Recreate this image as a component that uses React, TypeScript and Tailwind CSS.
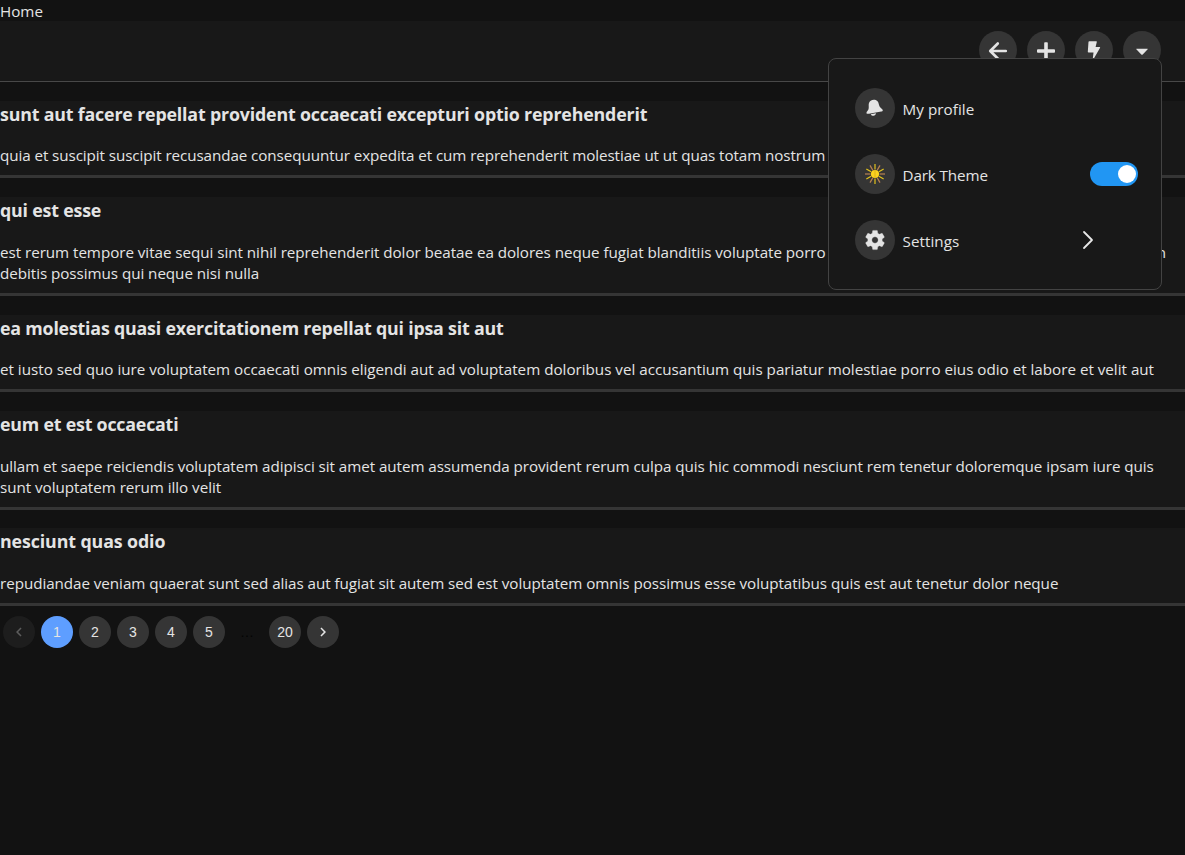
import type { ReactNode } from 'react';

type Post = { title: string; titleClass: string; lines: { text: string; cls: string }[]; cls: string; gap: string };

const posts: Post[] = [
  {
    title: 'sunt aut facere repellat provident occaecati excepturi optio reprehenderit',
    titleClass: 'tracking-[-0.165px]',
    cls: 'h-[77px] mb-[19px]',
    gap: 'mb-[18px]',
    lines: [
      { text: 'quia et suscipit suscipit recusandae consequuntur expedita et cum reprehenderit molestiae ut ut quas totam nostrum', cls: 'tracking-[-0.078px]' },
    ],
  },
  {
    title: 'qui est esse',
    titleClass: 'tracking-[-0.18px]',
    cls: 'h-[99px] mb-[19px]',
    gap: 'mb-[19px]',
    lines: [
      { text: 'est rerum tempore vitae sequi sint nihil reprehenderit dolor beatae ea dolores neque fugiat blanditiis voluptate porro vel nihil molestiae ut reiciendis qui aperiam non', cls: 'tracking-[-0.038px]' },
      { text: 'debitis possimus qui neque nisi nulla', cls: 'tracking-[-0.045px]' },
    ],
  },
  {
    title: 'ea molestias quasi exercitationem repellat qui ipsa sit aut',
    titleClass: 'tracking-[-0.19px]',
    cls: 'h-[77px] mb-[19px]',
    gap: 'mb-[18px]',
    lines: [
      { text: 'et iusto sed quo iure voluptatem occaecati omnis eligendi aut ad voluptatem doloribus vel accusantium quis pariatur molestiae porro eius odio et labore et velit aut', cls: 'tracking-[-0.004px]' },
    ],
  },
  {
    title: 'eum et est occaecati',
    titleClass: 'tracking-[-0.2px]',
    cls: 'h-[99px] mb-[18px]',
    gap: 'mb-[19px]',
    lines: [
      { text: 'ullam et saepe reiciendis voluptatem adipisci sit amet autem assumenda provident rerum culpa quis hic commodi nesciunt rem tenetur doloremque ipsam iure quis', cls: 'tracking-[-0.054px]' },
      { text: 'sunt voluptatem rerum illo velit', cls: 'tracking-[-0.035px]' },
    ],
  },
  {
    title: 'nesciunt quas odio',
    titleClass: 'tracking-[-0.1px]',
    cls: 'h-[78px]',
    gap: 'mb-[19px]',
    lines: [
      { text: 'repudiandae veniam quaerat sunt sed alias aut fugiat sit autem sed est voluptatem omnis possimus esse voluptatibus quis est aut tenetur dolor neque', cls: 'tracking-[-0.050px]' },
    ],
  },
];

function RoundButton({ children }: { children: ReactNode }) {
  return <button className="flex size-[38px] items-center justify-center rounded-full bg-[#353535] pt-[2px] text-[#e4e4e4]">{children}</button>;
}

function MenuIcon({ children }: { children: ReactNode }) {
  return <span className="flex size-10 shrink-0 items-center justify-center rounded-full bg-[#353535] text-[#e4e4e4]">{children}</span>;
}

function SunIcon() {
  const rays = Array.from({ length: 12 }, (_, i) => i);
  return (
    <svg viewBox="0 0 20 20" className="size-5">
      {rays.map((i) => (
        <line key={i} x1="10" y1="0" x2="10" y2="5.500" strokeWidth="1.200" stroke={i % 3 === 0 ? (i % 6 === 0 ? '#e3c31c' : '#b98252') : i % 2 ? '#b98252' : '#e3c31c'} transform={`rotate(${i * 30} 10 10)`} />
      ))}
      <circle cx="10" cy="10" r="4.100" fill="#fbd31f" />
      <path d="M10 6v8" stroke="#d9a91c" strokeWidth="0.8" />
    </svg>
  );
}

function Menu() {
  return (
    <div className="absolute left-[828px] top-[58px] flex h-[232px] w-[334px] flex-col gap-[26px] rounded-lg border border-[#434343] bg-[#181818] pl-[25.500px] pt-[29px]">
      <div className="flex items-center gap-2">
        <MenuIcon>
          <svg viewBox="0 0 18 18" className="size-[18px]" fill="currentColor">
            <path d="M4.700 1.700C6.600.4 9.600.5 11.300 2c1.700 1.600 1.300 3.700 2.300 5.500.8 1.500 3 2.500 3.200 3.700.1.900-.8 1.200-1.600 1.400L3 14.700c-1.200.2-2.400.2-2.500-.7-.2-1.200 1.500-2.100 2-3.700.5-1.700.1-3.200.2-4.700.1-1.600.6-3 2-3.900z" />
            <path d="M4.800 15.200l5.200-.9c-.1 1.300-1.100 2.200-2.400 2.400-1.200.1-2.400-.4-2.800-1.500z" />
          </svg>
        </MenuIcon>
        <span className="pt-[2px] text-[15.200px] leading-[21px] tracking-[0.06px]">My profile</span>
      </div>
      <div className="flex items-center gap-2">
        <MenuIcon><SunIcon /></MenuIcon>
        <span className="flex-1 pt-[2px] text-[15.200px] leading-[21px] tracking-[-0.1px]">Dark Theme</span>
        <span className="mr-[23px] flex h-6 w-12 items-center justify-end rounded-full bg-[#2196f3] pr-[2px]">
          <span className="size-[18px] rounded-full bg-white" />
        </span>
      </div>
      <div className="flex items-center gap-2">
        <MenuIcon>
          <svg viewBox="0 0 24 24" className="size-6" fill="currentColor" stroke="currentColor" strokeWidth="0.300">
            <path d="M19.140 12.940c.040-.3.060-.610.060-.940 0-.320-.020-.640-.070-.940l2.030-1.580c.180-.140.230-.410.120-.610l-1.920-3.320c-.120-.220-.370-.290-.590-.220l-2.390.960c-.5-.380-1.030-.7-1.620-.940l-.360-2.540c-.040-.240-.240-.410-.480-.410h-3.840c-.240 0-.430.170-.470.410l-.360 2.540c-.590.240-1.130.570-1.620.940l-2.390-.960c-.220-.080-.470 0-.590.220L2.740 8.870c-.120.210-.080.470.120.610l2.030 1.580c-.050.3-.090.630-.090.940s.020.640.070.940l-2.030 1.580c-.180.140-.230.410-.120.610l1.920 3.320c.120.220.370.290.590.220l2.390-.960c.5.380 1.030.7 1.620.940l.360 2.540c.050.240.240.410.480.410h3.840c.240 0 .440-.170.470-.410l.360-2.540c.590-.240 1.130-.560 1.620-.940l2.390.960c.220.080.470 0 .590-.220l1.920-3.320c.120-.220.070-.470-.120-.610l-2.010-1.580zM12 15.200c-1.760 0-3.200-1.440-3.200-3.200s1.440-3.200 3.200-3.200 3.200 1.440 3.200 3.200-1.440 3.200-3.200 3.200z" />
          </svg>
        </MenuIcon>
        <span className="flex-1 pt-[2px] text-[15.200px] leading-[21px] tracking-[0.05px]">Settings</span>
        <svg viewBox="0 0 12 20" className="mr-[67px] h-5 w-3" fill="none" stroke="#e8e8e8" strokeWidth="1.800" strokeLinecap="round" strokeLinejoin="round">
          <path d="M2 2l8 8-8 8" />
        </svg>
      </div>
    </div>
  );
}

function PageItem({ children, active }: { children: ReactNode; active?: boolean }) {
  return (
    <button className={`flex size-8 items-center justify-center rounded-full text-sm ${active ? 'bg-[#5e9eff]' : 'bg-[#353535]'}`}>{children}</button>
  );
}

export default function App() {
  return (
    <div className="relative h-[855px] w-[1185px] overflow-hidden bg-[#121212] font-['Open_Sans',sans-serif] text-[#e4e4e4]">
      <div className="h-[21px] text-[15.200px] leading-[22px]"><span>Home</span></div>
      <header className="mb-[19px] flex h-[61px] items-start justify-end gap-[10px] border-b border-[#484848] bg-[#181818] pr-6 pt-[10px]">
        <RoundButton>
          <svg viewBox="0 0 20 20" className="size-5" fill="none" stroke="currentColor" strokeWidth="2.600" strokeLinecap="round" strokeLinejoin="round"><path d="M9.800 2.500L2.200 10l7.600 7.500M2.500 10h15.300" /></svg>
        </RoundButton>
        <RoundButton>
          <svg viewBox="0 0 20 20" className="size-5" fill="currentColor"><path d="M8.200 2q0-.8.800-.8h2q.8 0 .8.800v6.200H18q1 0 1 .8v2q0 .8-1 .8h-6.200V19H8.200v-7.200H2q-1 0-1-.8V9q0-.8 1-.8h6.200z" /></svg>
        </RoundButton>
        <RoundButton>
          <svg viewBox="0 0 20 20" className="size-5" fill="currentColor"><path d="M5.300.2h7q.7 0 .5.700L11.600 6h4q.8 0 .5.700L9.300 18.600q-.6.600-.6-.2L9.500 11.500H4.600q-.8 0-.8-.8L4.500.8q.1-.6.800-.6z" /></svg>
        </RoundButton>
        <RoundButton>
          <svg viewBox="0 0 20 20" className="size-5" fill="currentColor"><path d="M4.600 7.700h10.800q.8 0 .3.600l-5 5.100q-.7.600-1.400 0l-5-5.100q-.5-.6.300-.6z" /></svg>
        </RoundButton>
      </header>
      <main>
        {posts.map((p) => (
          <article key={p.title} className={`border-b-[3px] border-[#353535] bg-[#181818] ${p.cls}`}>
            <h3 className={`h-[26px] whitespace-nowrap text-[17.800px] font-bold leading-[26px] ${p.gap}`}><span className={p.titleClass}>{p.title}</span></h3>
            {p.lines.map((l) => (
              <p key={l.text} className="h-[21px] whitespace-nowrap text-[15.200px] leading-[21px]"><span className={l.cls}>{l.text}</span></p>
            ))}
          </article>
        ))}
      </main>
      <nav className="mt-[10px] flex gap-[6px] pl-[3px] font-['Liberation_Sans',sans-serif]">
        <span className="flex size-8 items-center justify-center rounded-full bg-[#1d1d1d] text-[#5c5c5c]">
          <svg viewBox="0 0 24 24" className="size-[18px]" fill="currentColor"><path d="M15.410 7.410L14 6l-6 6 6 6 1.410-1.410L10.830 12z" /></svg>
        </span>
        <PageItem active>1</PageItem>
        <PageItem>2</PageItem>
        <PageItem>3</PageItem>
        <PageItem>4</PageItem>
        <PageItem>5</PageItem>
        <span className="flex size-8 items-center justify-center text-sm text-[#030303]">…</span>
        <PageItem>20</PageItem>
        <PageItem>
          <svg viewBox="0 0 24 24" className="size-[18px]" fill="currentColor"><path d="M10 6L8.590 7.410 13.170 12l-4.580 4.590L10 18l6-6z" /></svg>
        </PageItem>
      </nav>
      <Menu />
    </div>
  );
}
